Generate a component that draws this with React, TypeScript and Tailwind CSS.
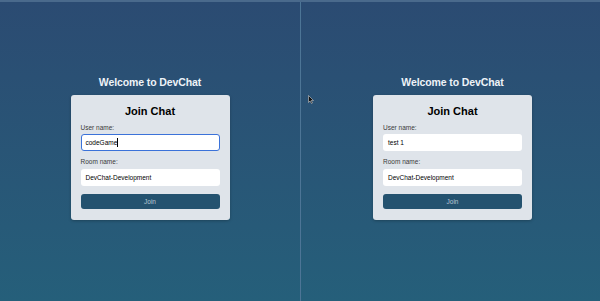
function JoinPane({ user, focused }: { user: string; focused?: boolean }) {
  return (
    <div className="flex-1 flex flex-col items-center pt-[72px]">
      <h1 className="text-[10.5px] font-bold text-[#eef3f8] leading-4 tracking-[-0.1px]">Welcome to DevChat</h1>
      <div className="mt-[5px] w-[159px] rounded-[3px] bg-[#dfe4ea] px-[10px] pt-[8px] pb-[9px] shadow-[0_1px_3px_rgba(0,0,0,0.25)]">
        <h2 className="text-center text-[11px] font-bold text-black leading-4">Join Chat</h2>
        <label className="mt-[4px] block text-[6.5px] text-[#3a3a3a] leading-[10px]">User name:</label>
        <div
          className={
            focused
              ? "mt-[1px] h-[17px] rounded-[3px] bg-white border-[1.5px] border-[#3b72d9] px-[4px] flex items-center text-[6.5px] text-black"
              : "mt-[1px] h-[17px] rounded-[3px] bg-white px-[5px] flex items-center text-[6.5px] text-black"
          }
        >
          {user}
          {focused && <span className="inline-block w-px h-[9px] bg-black" />}
        </div>
        <label className="mt-[6px] block text-[6.5px] text-[#3a3a3a] leading-[10px]">Room name:</label>
        <div className="mt-[2px] h-[17px] rounded-[3px] bg-white px-[5px] flex items-center text-[6.5px] text-black">
          DevChat-Development
        </div>
        <button className="mt-[8px] w-full h-[15px] rounded-[3px] bg-[#24526f] text-[6.5px] text-[#b8c6d3]">
          Join
        </button>
      </div>
    </div>
  )
}

export default function App() {
  return (
    <main
      className="w-[600px] h-[301px] flex bg-gradient-to-b from-[#2b4b72] to-[#255f7a] border-t-2 border-[#4a6a8c]"
      style={{ fontFamily: '"Liberation Sans", Arial, sans-serif' }}
    >
      <div className="w-[300px] flex">
        <JoinPane user="codeGame" focused />
      </div>
      <div className="w-px bg-[#4d7596]" />
      <div className="flex-1 flex pl-[4px]">
        <JoinPane user="test 1" />
      </div>
      {/* mouse cursor */}
      <svg className="absolute left-[308px] top-[95px]" width="6" height="9" viewBox="0 0 6 9">
        <path d="M0.5 0.5 L0.5 7.5 L2 6 L3.5 8.5 L4.5 8 L3.2 5.5 L5.5 5.5 Z" fill="#111" stroke="#ccc" strokeWidth="0.6" />
      </svg>
    </main>
  )
}
